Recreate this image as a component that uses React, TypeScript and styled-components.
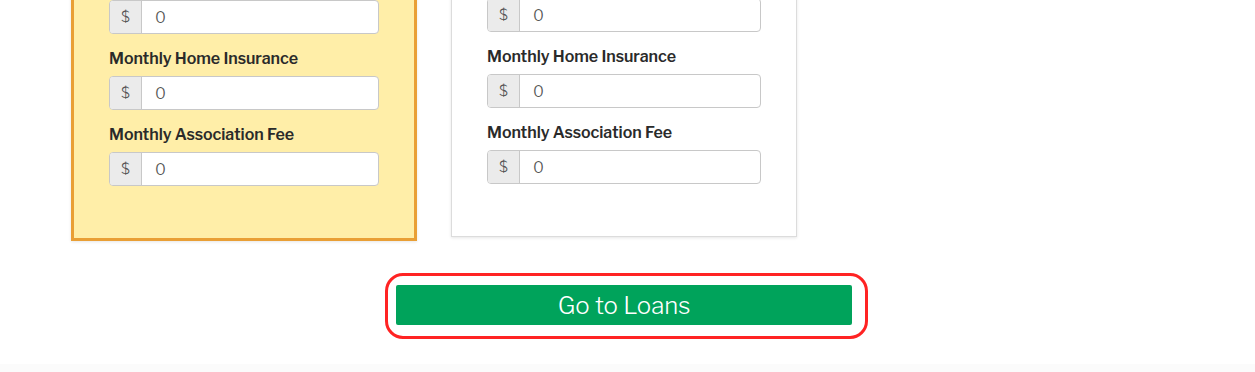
import * as React from 'react'
import styled, { createGlobalStyle } from 'styled-components'

const GlobalStyle = createGlobalStyle`
  html, body {
    margin: 0;
    padding: 0;
    background: #fff;
    overflow: hidden;
  }
  body {
    font-family: "Libre Franklin", Inter, "Liberation Sans", sans-serif;
    color: #2b2b2b;
  }
  * { box-sizing: border-box; }
`

const Page = styled.div`
  width: 1255px;
  height: 372px;
  overflow: hidden;
  display: flex;
  flex-direction: column;
`

const Cards = styled.div`
  display: grid;
  grid-template-columns: repeat(3, 346px);
  column-gap: 34px;
  align-items: start;
  padding-left: 71px;
  margin-top: -65px;
`

const Card = styled.section<{ $highlight?: boolean }>`
  padding: 35px 35px 37px;
  background: ${p => (p.$highlight ? '#ffeea8' : '#fff')};
  border: ${p => (p.$highlight ? '3px solid #e99f35' : '1px solid #dcdcdc')};
  box-shadow: 0 1px 3px rgba(0, 0, 0, 0.1);
`

const Field = styled.div`
  margin-bottom: 15px;
`

const Label = styled.label`
  display: block;
  font-size: 16px;
  line-height: 20px;
  font-weight: 600;
  color: #2a2a2a;
  margin-bottom: 7px;
  letter-spacing: -0.05px;
`

const InputGroup = styled.div`
  display: flex;
  height: 34px;
  border: 1px solid #c8c8c8;
  border-radius: 4px;
  overflow: hidden;
  background: #fff;
`

const Addon = styled.span`
  flex: 0 0 32px;
  display: flex;
  align-items: center;
  justify-content: center;
  background: #ebebeb;
  border-right: 1px solid #c8c8c8;
  color: #555;
  font-size: 15px;
  font-weight: 300;
`

const Input = styled.input`
  flex: 1;
  min-width: 0;
  border: none;
  outline: none;
  padding: 0 13px;
  font-family: inherit;
  font-size: 16px;
  font-weight: 300;
  color: #555;
  background: transparent;
`

const Actions = styled.div`
  display: flex;
  justify-content: center;
  margin-top: 32px;
  padding-right: 2px;
`

const Highlight = styled.div`
  border: 3px solid #ff2323;
  border-radius: 18px;
  padding: 9px 13px 11px 8px;
`

const PrimaryButton = styled.button`
  display: block;
  width: 456px;
  height: 40px;
  border: none;
  border-radius: 2px;
  background: #00a35b;
  color: #fff;
  font-family: inherit;
  font-size: 24px;
  font-weight: 300;
  cursor: pointer;
`

const Footer = styled.div`
  margin-top: 25px;
  flex: 1;
  background: #fbfbfb;
`

const fields = ['Monthly Property Tax', 'Monthly Home Insurance', 'Monthly Association Fee']

const FeeCard = ({ highlight }: { highlight?: boolean }) => (
  <Card $highlight={highlight}>
    {fields.map(name => (
      <Field key={name}>
        <Label>{name}</Label>
        <InputGroup>
          <Addon>$</Addon>
          <Input defaultValue="0" />
        </InputGroup>
      </Field>
    ))}
  </Card>
)

export default () => (
  <Page>
    <GlobalStyle />
    <Cards>
      <FeeCard highlight />
      <FeeCard />
      <div />
    </Cards>
    <Actions>
      <Highlight>
        <PrimaryButton>Go to Loans</PrimaryButton>
      </Highlight>
    </Actions>
    <Footer />
  </Page>
)
